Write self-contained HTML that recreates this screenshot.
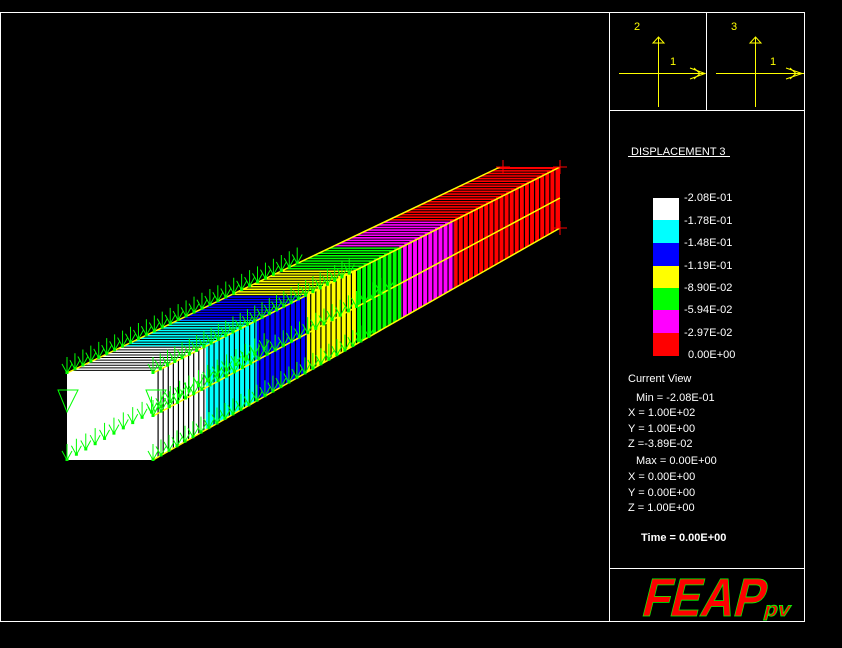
<!DOCTYPE html>
<html><head><meta charset="utf-8"><style>
html,body{margin:0;padding:0;background:#000;}
body{width:842px;height:648px;overflow:hidden;position:relative;font-family:"Liberation Sans",sans-serif;}
svg{position:absolute;left:0;top:0;}
</style></head><body>
<svg id="s" width="842" height="648" xmlns="http://www.w3.org/2000/svg">
<rect x="0" y="0" width="842" height="648" fill="#000"/>
<g id="beam"></g>
<g stroke="#fff" stroke-width="1" fill="none">
<rect x="0.5" y="12.5" width="804" height="609"/>
<line x1="609.5" y1="12" x2="609.5" y2="622"/>
<line x1="609" y1="110.5" x2="805" y2="110.5"/>
<line x1="706.5" y1="12" x2="706.5" y2="110"/>
<line x1="609" y1="568.5" x2="805" y2="568.5"/>
</g>
<g stroke="#ff0" stroke-width="1" fill="none">
<line x1="619" y1="73.5" x2="705" y2="73.5"/><line x1="658.5" y1="37" x2="658.5" y2="107"/>
<path d="M653 43 L658.5 37 L664 43 Z"/>
<path d="M690 68 L705 73.5 L690 79 M694 68 L700 73.5 L694 79 M690 73.5 L698 73.5"/>
<line x1="716" y1="73.5" x2="804" y2="73.5"/><line x1="755.5" y1="37" x2="755.5" y2="107"/>
<path d="M750 43 L755.5 37 L761 43 Z"/>
<path d="M786 68 L802 73.5 L786 79 M790 68 L796 73.5 L790 79 M784 73.5 L794 73.5"/>
</g>
<g fill="#ff0" font-size="11">
<text x="634" y="30">2</text><text x="670" y="65">1</text>
<text x="731" y="30">3</text><text x="770" y="65">1</text>
</g>
<g fill="#fff" font-size="11">
<text x="631" y="155">DISPLACEMENT 3</text>
<line x1="628" y1="156.5" x2="730" y2="156.5" stroke="#fff"/>
<rect x="653" y="198" width="26" height="22" fill="#fff"/>
<rect x="653" y="220" width="26" height="23" fill="#0ff"/>
<rect x="653" y="243" width="26" height="23" fill="#00f"/>
<rect x="653" y="266" width="26" height="22" fill="#ff0"/>
<rect x="653" y="288" width="26" height="22" fill="#0f0"/>
<rect x="653" y="310" width="26" height="23" fill="#f0f"/>
<rect x="653" y="333" width="26" height="23" fill="#f00"/>
<text x="684" y="201">-2.08E-01</text>
<text x="684" y="224">-1.78E-01</text>
<text x="684" y="246">-1.48E-01</text>
<text x="684" y="269">-1.19E-01</text>
<text x="684" y="291">-8.90E-02</text>
<text x="684" y="313">-5.94E-02</text>
<text x="684" y="336">-2.97E-02</text>
<text x="688" y="358">0.00E+00</text>
<text x="628" y="382">Current View</text>
<text x="636" y="401">Min = -2.08E-01</text>
<text x="628" y="416">X = 1.00E+02</text>
<text x="628" y="432">Y = 1.00E+00</text>
<text x="628" y="447">Z =-3.89E-02</text>
<text x="636" y="464">Max =  0.00E+00</text>
<text x="628" y="480">X = 0.00E+00</text>
<text x="628" y="496">Y = 0.00E+00</text>
<text x="628" y="511">Z = 1.00E+00</text>
<text x="641" y="541" font-weight="bold">Time = 0.00E+00</text>
</g>
<g transform="translate(0,616) skewX(-14) translate(0,-616)" font-family="Liberation Sans,sans-serif" font-weight="bold" fill="#f00" stroke="#0f0" stroke-width="0.8">
<text x="640" y="616" font-size="54" textLength="122" lengthAdjust="spacingAndGlyphs">FEAP</text>
<text x="763" y="616" font-size="20" textLength="26" lengthAdjust="spacingAndGlyphs">pv</text>
</g>
</svg>
<script>
var g=document.getElementById('beam'),h='';
function L(a,b,t){return [a[0]+(b[0]-a[0])*t,a[1]+(b[1]-a[1])*t];}
var TLn=[67,373],TLf=[500,167],TRn=[153,373],TRf=[560,167],BRn=[153,460],BRf=[560,228],BLn=[67,460];
var segs=[[0,.13,'#fff'],[.13,.255,'#0ff'],[.255,.378,'#00f'],[.378,.5,'#ff0'],[.5,.61,'#0f0'],[.61,.74,'#f0f'],[.74,1,'#f00']];
function P(pts,c){return '<polygon points="'+pts.map(function(p){return p.join(',')}).join(' ')+'" fill="'+c+'"/>';}
segs.forEach(function(s){
 h+=P([L(TLn,TLf,s[0]),L(TLn,TLf,s[1]),L(TRn,TRf,s[1]),L(TRn,TRf,s[0])],s[2]);
 h+=P([L(TRn,TRf,s[0]),L(TRn,TRf,s[1]),L(BRn,BRf,s[1]),L(BRn,BRf,s[0])],s[2]);
});
h+=P([TLn,TRn,BRn,BLn],'#fff');
for(var i=1;i<80;i++){var t=i/80;var a=L(TRn,TRf,t),b=L(BRn,BRf,t);
 h+='<line x1="'+a[0]+'" y1="'+a[1]+'" x2="'+b[0]+'" y2="'+b[1]+'" stroke="#000" stroke-width="1.2"/>';
 var c=L(TLn,TLf,t);h+='<line x1="'+c[0]+'" y1="'+c[1]+'" x2="'+(a[0]-3)+'" y2="'+c[1]+'" stroke="#000" stroke-width="1"/>';}
h+='<polyline points="'+TLn+' '+TLf+'" stroke="#ff0" stroke-width="1.5" fill="none"/>';
h+='<polyline points="'+TRn+' '+TRf+'" stroke="#ff0" stroke-width="1.5" fill="none"/>';
h+='<polyline points="'+BRn+' '+BRf+'" stroke="#ff0" stroke-width="1.5" fill="none"/>';
h+='<polyline points="153,416 560,198" stroke="#ff0" stroke-width="1.5" fill="none"/>';
function arrow(x,y){return '<path d="M'+x+' '+(y-16)+' V'+y+' M'+(x-5)+' '+(y-9)+' L'+x+' '+y+' L'+(x+5)+' '+(y-9)+'" stroke="#0f0" stroke-width="1" fill="none"/><rect x="'+(x-1.5)+'" y="'+(y-2)+'" width="3" height="3" fill="#0f0"/>';}
var lines=[[TLn,TLf,.55,30],[TRn,TRf,.5,28],[[153,416],[560,198],.6,30],[BRn,BRf,.55,28],[BLn,[480,228],.5,22]];
lines.forEach(function(l){for(var i=0;i<l[3];i++){var t=i/l[3]*l[2];var p=L(l[0],l[1],t);h+=arrow(p[0],p[1]);}});
h+='<path d="M58 390 H78 L67 412 Z M146 390 H166 L155 412 Z" stroke="#0f0" fill="none"/>';
h+='<path d="M496 167 H510 M503 160 V174 M553 167 H567 M560 160 V174 M553 228 H567 M560 221 V235" stroke="#f00"/>';
g.innerHTML=h;
</script>
</body></html>
